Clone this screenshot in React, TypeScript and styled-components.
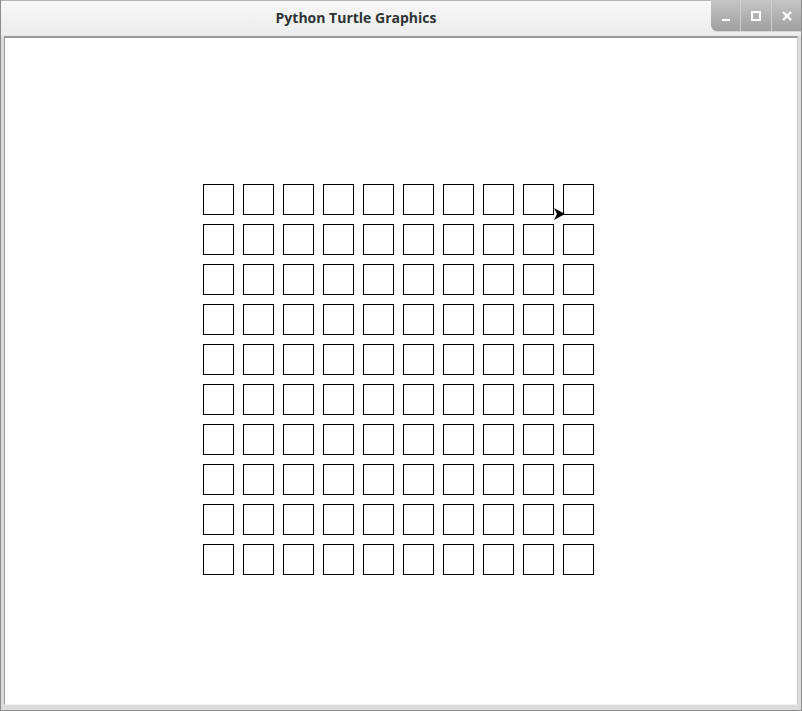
import React from 'react'
import styled, { createGlobalStyle } from 'styled-components'

const Global = createGlobalStyle`
  html, body {
    margin: 0;
    padding: 0;
    background: #ffffff;
  }
  body {
    font-family: "Open Sans", "DejaVu Sans", sans-serif;
  }
`

const Window = styled.div`
  width: 802px;
  height: 711px;
  box-sizing: border-box;
  display: flex;
  flex-direction: column;
  background: #e8e8e8;
  border: 1px solid #8c8c8c;
  border-top: none;
  overflow: hidden;
`

const TitleBar = styled.div`
  height: 35px;
  flex: 0 0 35px;
  display: flex;
  align-items: flex-start;
  background: linear-gradient(#f7f7f7, #ececec);
  border-top: 1px solid #b5b5b5;
`

const Title = styled.div`
  flex: 1;
  text-align: center;
  margin-top: 7px;
  font-size: 14px;
  font-weight: 700;
  color: #2e3436;
`

// window buttons sit flush in the top right corner
const Controls = styled.div`
  flex: none;
  margin-top: -1px;
  margin-right: -1px;
  height: 31px;
  display: flex;
  border-bottom-left-radius: 6px;
  overflow: hidden;
  background: linear-gradient(#c6c6c6, #9f9f9f);
  box-shadow: 0 1px 0 #d8d8d8;
`

const ControlButton = styled.div<{ $first?: boolean }>`
  width: ${p => (p.$first ? 29 : 31)}px;
  height: 31px;
  display: flex;
  align-items: center;
  justify-content: center;
  border-left: ${p => (p.$first ? 'none' : '1px solid #cfcfcf')};
  box-sizing: border-box;
`

const Frame = styled.div`
  flex: 1;
  display: flex;
  padding: 0 3px 5px 3px;
  background: #dcdcdc;
`

const Canvas = styled.div`
  flex: 1;
  background: #ffffff;
  border-top: 2px solid #9a9a9a;
  border-left: 1px solid #9a9a9a;
  border-right: 1px solid #c8c8c8;
  border-bottom: 1px solid #f0f0f0;
  padding: 146px 0 0 198px;
`

const Grid = styled.div`
  position: relative;
  display: grid;
  grid-template-columns: repeat(10, 31px);
  grid-auto-rows: 31px;
  gap: 9px;
  width: max-content;
`

const Cell = styled.div`
  box-sizing: border-box;
  border: 1px solid #000000;
`

const Turtle = styled.svg`
  position: absolute;
  left: 349px;
  top: 23px;
`

export default function App() {
  const cells = Array.from({ length: 100 }, (_, i) => i)

  return (
    <>
      <Global />
      <Window>
        <TitleBar>
          <Title>Python Turtle Graphics</Title>
          <Controls>
            <ControlButton $first>
              <svg width="12" height="12" viewBox="0 0 12 12">
                <rect x="2" y="9" width="8" height="2" fill="#ffffff" />
              </svg>
            </ControlButton>
            <ControlButton>
              <svg width="12" height="12" viewBox="0 0 12 12">
                <rect x="2" y="2" width="8" height="8" fill="none" stroke="#ffffff" strokeWidth="2" />
              </svg>
            </ControlButton>
            <ControlButton>
              <svg width="12" height="12" viewBox="0 0 12 12">
                <path d="M2 2 L10 10 M10 2 L2 10" stroke="#ffffff" strokeWidth="2.4" />
              </svg>
            </ControlButton>
          </Controls>
        </TitleBar>
        <Frame>
          <Canvas>
            <Grid>
              {cells.map(i => <Cell key={i} />)}
              <Turtle width="14" height="14" viewBox="0 0 14 14">
                <polygon points="13,7 2,1 5,7 2,13" fill="#000000" />
              </Turtle>
            </Grid>
          </Canvas>
        </Frame>
      </Window>
    </>
  )
}
